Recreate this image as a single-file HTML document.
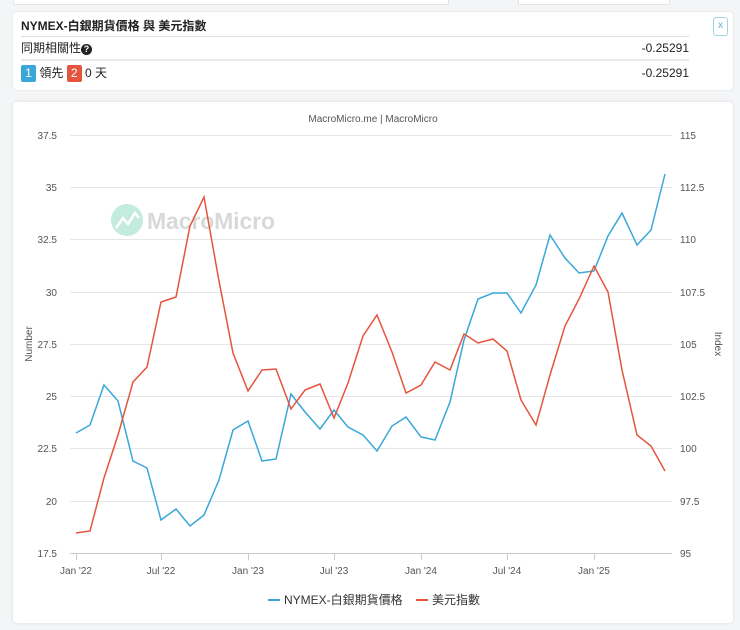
<!DOCTYPE html>
<html><head><meta charset="utf-8"><style>
body{margin:0;background:#f4f5f7;width:740px;height:630px;overflow:hidden;font-family:"Liberation Sans","Noto Sans CJK TC",sans-serif;color:#222}
.top{position:absolute;top:0;height:4px;background:#fff;border:1px solid #e5e5e5;border-top:none}
.card{position:absolute;left:13px;top:12px;width:720px;height:78px;background:#fff;border-radius:4px;box-shadow:0 0 2px rgba(0,0,0,.12)}
.row{position:absolute;left:8px;width:668px;font-size:12px}
.badge{display:inline-block;width:15px;height:17px;line-height:17px;text-align:center;color:#fff;font-size:12px;border-radius:2px;vertical-align:middle}
.chart{position:absolute;left:13px;top:102px;width:720px;height:521px;background:#fff;border-radius:4px;box-shadow:0 0 3px rgba(0,0,0,.12)}
</style></head><body>
<div class="top" style="left:13px;width:434px"></div>
<div class="top" style="left:518px;width:150px"></div>
<div class="card">
 <div class="row" style="top:4px;height:20px;line-height:20px;font-weight:bold;border-bottom:1px solid #ddd">NYMEX-白銀期貨價格 與 美元指數</div>
 <div class="row" style="top:25px;height:22px;line-height:22px;border-bottom:2px solid #e8e8e8">同期相關性<span style="display:inline-block;width:11px;height:11px;border-radius:50%;background:#222;color:#fff;font-size:9px;line-height:11px;text-align:center;font-weight:bold;vertical-align:0px">?</span><span style="float:right">-0.25291</span></div>
 <div class="row" style="top:50px;height:22px;line-height:22px"><span class="badge" style="background:#3aa7d9">1</span> 領先 <span class="badge" style="background:#e5553e">2</span> 0 天<span style="float:right">-0.25291</span></div>
 <div style="position:absolute;left:700px;top:5px;width:13px;height:17px;border:1px solid #9fd6e6;border-radius:3px;color:#5ab4cf;font-size:10px;text-align:center;line-height:16px">x</div>
</div>
<div class="chart">
<svg width="720" height="521" viewBox="13 102 720 521" style="position:absolute;left:0;top:0" font-family="Liberation Sans, Noto Sans CJK TC, sans-serif">
<text x="373" y="122" font-size="10" fill="#555" text-anchor="middle">MacroMicro.me | MacroMicro</text>
<g stroke="#e6e6e6" stroke-width="1">
<line x1="70" x2="672" y1="135.5" y2="135.5"/><line x1="70" x2="672" y1="187.5" y2="187.5"/><line x1="70" x2="672" y1="239.5" y2="239.5"/><line x1="70" x2="672" y1="292.5" y2="292.5"/><line x1="70" x2="672" y1="344.5" y2="344.5"/><line x1="70" x2="672" y1="396.5" y2="396.5"/><line x1="70" x2="672" y1="448.5" y2="448.5"/><line x1="70" x2="672" y1="501.5" y2="501.5"/>
</g>
<line x1="70" x2="672" y1="553.5" y2="553.5" stroke="#ccc"/>
<g stroke="#ccc"><line x1="76.5" x2="76.5" y1="553" y2="560"/><line x1="161.5" x2="161.5" y1="553" y2="560"/><line x1="248.5" x2="248.5" y1="553" y2="560"/><line x1="334.5" x2="334.5" y1="553" y2="560"/><line x1="421.5" x2="421.5" y1="553" y2="560"/><line x1="507.5" x2="507.5" y1="553" y2="560"/><line x1="594.5" x2="594.5" y1="553" y2="560"/></g>
<g font-size="10" fill="#555" text-anchor="end">
<text x="57" y="139">37.5</text><text x="57" y="191">35</text><text x="57" y="243">32.5</text><text x="57" y="296">30</text><text x="57" y="348">27.5</text><text x="57" y="400">25</text><text x="57" y="452">22.5</text><text x="57" y="505">20</text><text x="57" y="557">17.5</text>
</g>
<g font-size="10" fill="#555">
<text x="680" y="139">115</text><text x="680" y="191">112.5</text><text x="680" y="243">110</text><text x="680" y="296">107.5</text><text x="680" y="348">105</text><text x="680" y="400">102.5</text><text x="680" y="452">100</text><text x="680" y="505">97.5</text><text x="680" y="557">95</text>
</g>
<g font-size="10" fill="#555" text-anchor="middle">
<text x="76" y="574">Jan '22</text><text x="161" y="574">Jul '22</text><text x="248" y="574">Jan '23</text><text x="334" y="574">Jul '23</text><text x="421" y="574">Jan '24</text><text x="507" y="574">Jul '24</text><text x="594" y="574">Jan '25</text>
</g>
<text transform="translate(32,344) rotate(-90)" font-size="10" fill="#555" text-anchor="middle">Number</text>
<text transform="translate(715,344) rotate(90)" font-size="10" fill="#555" text-anchor="middle">Index</text>
<g opacity="0.9">
<circle cx="127" cy="220" r="16" fill="#bdeadb"/>
<path d="M116 228 L123 218 L128 224 L135 213 L139 218" stroke="#fff" stroke-width="2.5" fill="none"/>
<text x="147" y="229" font-size="23" fill="#d4d4d4" font-weight="bold" textLength="128">MacroMicro</text>
</g>
<polyline fill="none" stroke="#3aa7d9" stroke-width="1.5" points="76,433 90,425 104,385 118,401 133,461 147,468 161,520 176,509 190,526 204,515 219,480 233,430 248,421 262,461 276,459 291,394 305,412 320,429 334,410 348,427 363,435 377,451 392,426 406,417 421,437 435,440 450,402 464,340 478,299 493,293 507,293 521,313 536,285 550,235 565,258 579,273 594,271 608,236 622,213 637,245 651,230 665,174"/>
<polyline fill="none" stroke="#e5553e" stroke-width="1.5" points="76,533 90,531 104,478 118,435 133,382 147,367 161,302 176,297 190,226 204,197 219,281 233,353 248,391 262,370 276,369 291,409 305,390 320,384 334,418 348,383 363,336 377,315 392,352 406,393 421,385 435,362 450,370 464,334 478,343 493,339 507,351 521,400 536,425 550,375 565,326 579,299 594,266 608,292 622,370 637,435 651,446 665,471"/>
<line x1="268" x2="280" y1="600" y2="600" stroke="#3aa7d9" stroke-width="2"/>
<text x="284" y="604" font-size="12" fill="#333">NYMEX-白銀期貨價格</text>
<line x1="416" x2="428" y1="600" y2="600" stroke="#e5553e" stroke-width="2"/>
<text x="432" y="604" font-size="12" fill="#333">美元指數</text>
</svg>
</div>
</body></html>
